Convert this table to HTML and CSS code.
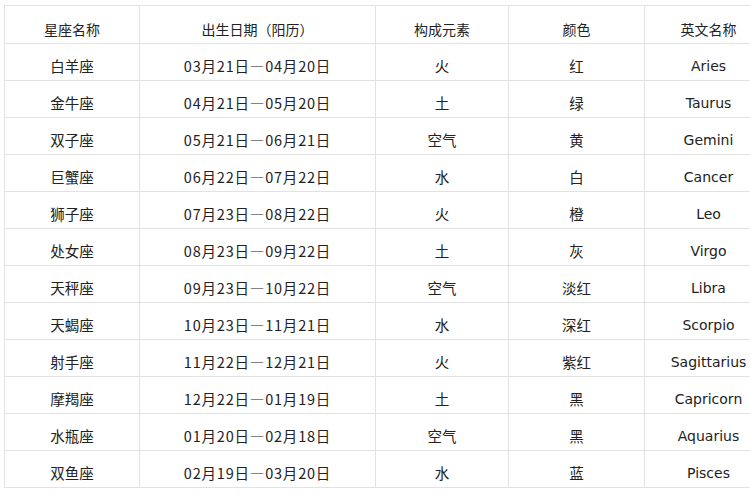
FILE: index.html
```html
<!DOCTYPE html>
<html lang="zh-CN">
<head>
<meta charset="utf-8">
<title>十二星座</title>
<link rel="stylesheet" href="styles.css">
</head>
<body>
<table class="zodiac">
  <colgroup>
    <col class="c1"><col class="c2"><col class="c3"><col class="c4"><col class="c5">
  </colgroup>
  <thead>
    <tr><th>星座名称</th><th>出生日期（阳历）</th><th>构成元素</th><th>颜色</th><th>英文名称</th></tr>
  </thead>
  <tbody>
    <tr><td>白羊座</td><td class="date">03月21日—04月20日</td><td>火</td><td>红</td><td class="en">Aries</td></tr>
    <tr><td>金牛座</td><td class="date">04月21日—05月20日</td><td>土</td><td>绿</td><td class="en">Taurus</td></tr>
    <tr><td>双子座</td><td class="date">05月21日—06月21日</td><td>空气</td><td>黄</td><td class="en">Gemini</td></tr>
    <tr><td>巨蟹座</td><td class="date">06月22日—07月22日</td><td>水</td><td>白</td><td class="en">Cancer</td></tr>
    <tr><td>狮子座</td><td class="date">07月23日—08月22日</td><td>火</td><td>橙</td><td class="en">Leo</td></tr>
    <tr><td>处女座</td><td class="date">08月23日—09月22日</td><td>土</td><td>灰</td><td class="en">Virgo</td></tr>
    <tr><td>天秤座</td><td class="date">09月23日—10月22日</td><td>空气</td><td>淡红</td><td class="en">Libra</td></tr>
    <tr><td>天蝎座</td><td class="date">10月23日—11月21日</td><td>水</td><td>深红</td><td class="en">Scorpio</td></tr>
    <tr><td>射手座</td><td class="date">11月22日—12月21日</td><td>火</td><td>紫红</td><td class="en">Sagittarius</td></tr>
    <tr><td>摩羯座</td><td class="date">12月22日—01月19日</td><td>土</td><td>黑</td><td class="en">Capricorn</td></tr>
    <tr><td>水瓶座</td><td class="date">01月20日—02月18日</td><td>空气</td><td>黑</td><td class="en">Aquarius</td></tr>
    <tr><td>双鱼座</td><td class="date">02月19日—03月20日</td><td>水</td><td>蓝</td><td class="en">Pisces</td></tr>
  </tbody>
</table>
</body>
</html>
```
FILE: styles.css
```css
html, body {
  margin: 0;
  padding: 0;
  background: #ffffff;
  overflow: hidden;
}
body {
  width: 750px;
  height: 500px;
  font-family: "Noto Sans CJK SC", "DejaVu Sans", sans-serif;
  color: #222222;
}
.zodiac {
  margin: 5px 0 0 4px;
  border-collapse: collapse;
  table-layout: fixed;
  width: 768px;
}
.c1 { width: 135px; }
.c2 { width: 236px; }
.c3 { width: 133px; }
.c4 { width: 136px; }
.c5 { width: 128px; }
.zodiac th,
.zodiac td {
  border: 1px solid #e2e2e2;
  text-align: center;
  vertical-align: middle;
  font-weight: normal;
  font-size: 14px;
  line-height: 20px;
  padding: 8px 0 0;
  white-space: nowrap;
  overflow: hidden;
}
.zodiac th {
  height: 29px;
}
.zodiac td {
  height: 28px;
  font-size: 14.5px;
}
.zodiac td.date {
  letter-spacing: 0.8px;
}
.zodiac td.en {
  font-family: "DejaVu Sans", sans-serif;
  font-size: 14px;
}
```
